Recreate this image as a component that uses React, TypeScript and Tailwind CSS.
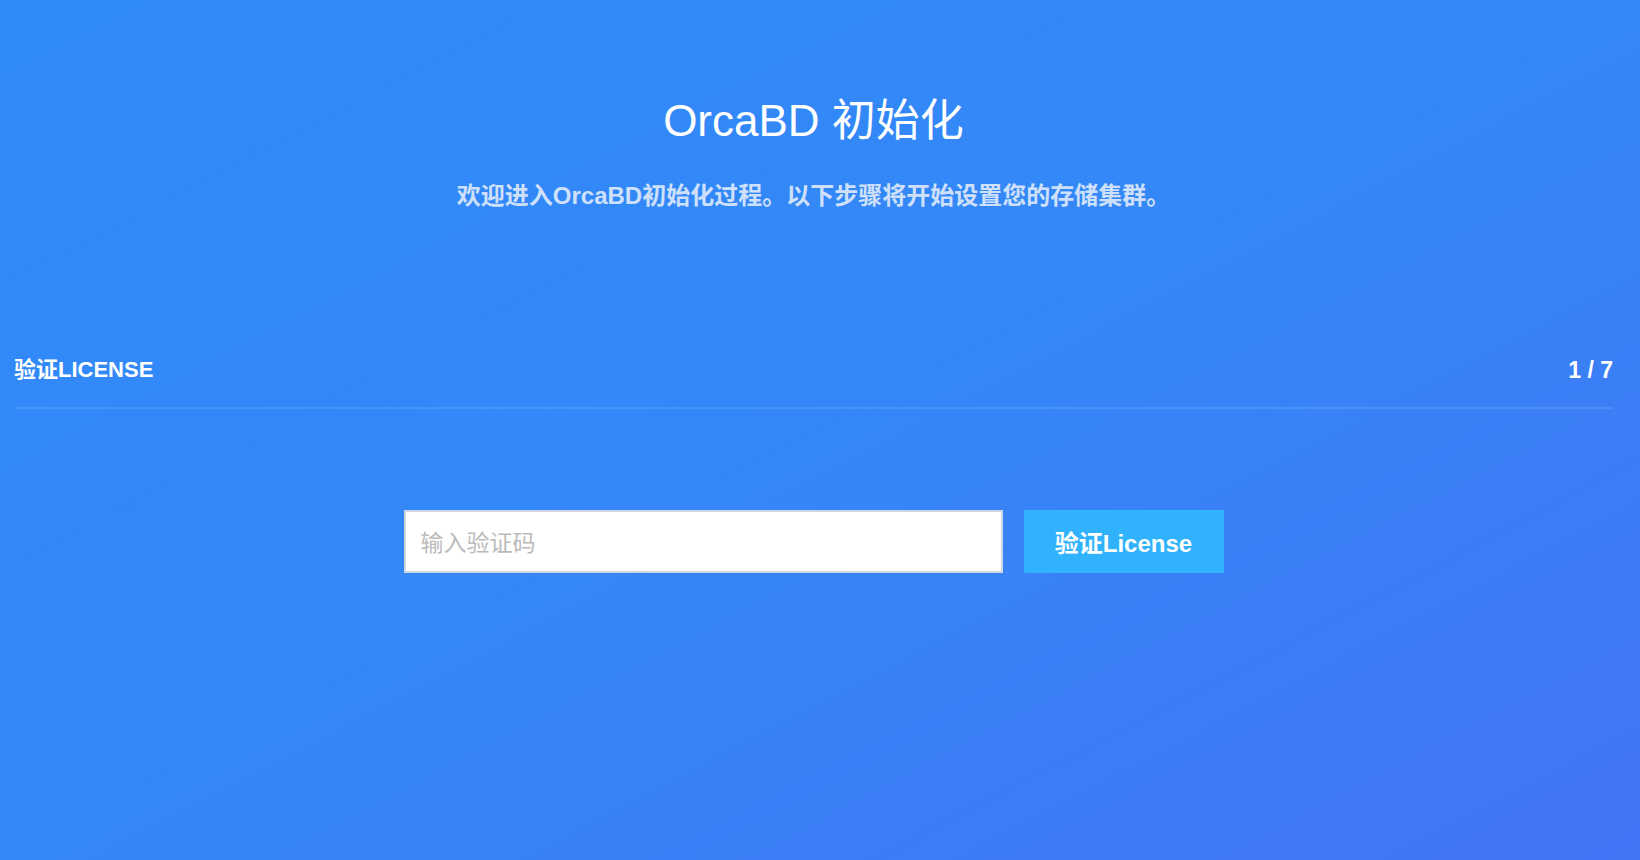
import React from 'react'

const font = "font-['Liberation_Sans','Noto_Sans_CJK_SC',sans-serif]"

const App: React.FC = () => {
  return (
    <div
      className={`h-[860px] w-full overflow-hidden bg-[linear-gradient(to_bottom_right,#2f8af9_0%,#3587f7_50%,#4274f6_100%)] pl-[14px] pr-[27px] ${font}`}
    >
      {/* Heading */}
      <div className="flex flex-col items-center pt-[94px]">
        <h1 className="text-[44px] leading-[53px] font-normal text-white">OrcaBD 初始化</h1>
        <p className="mt-[33px] text-[24px] leading-[32px] font-bold text-[#cfe0fb]">
          欢迎进入OrcaBD初始化过程。以下步骤将开始设置您的存储集群。
        </p>
      </div>

      {/* Step header */}
      <div className="mt-[143px] flex items-center justify-between border-b-2 border-white/10 pb-[22px]">
        <span className="text-[22px] leading-[30px] font-bold text-white">验证LICENSE</span>
        <span className="text-[23px] leading-[30px] font-bold text-white">1 / 7</span>
      </div>

      {/* License form */}
      <div className="mt-[101px] flex justify-center gap-[21px]">
        <input
          type="text"
          placeholder="输入验证码"
          className="h-[63px] w-[599px] border-2 border-[#cdd6e1] bg-white px-[15px] pt-[4px] text-[23px] text-gray-700 outline-none placeholder:text-[#bbbbbb]"
        />
        <button className="h-[63px] w-[200px] bg-[#31b2fc] pt-[4px] text-[24px] font-bold text-white">
          验证License
        </button>
      </div>
    </div>
  )
}

export default App
